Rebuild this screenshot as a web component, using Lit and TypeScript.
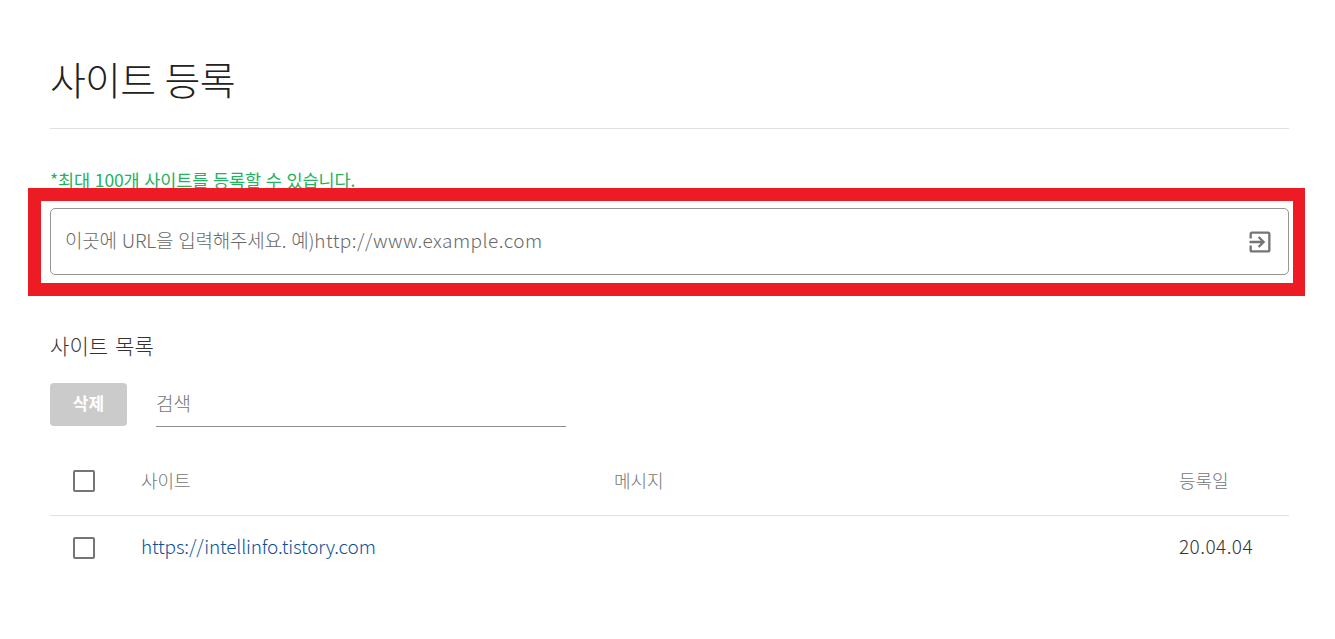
import { LitElement, html, css } from 'lit';
import { customElement, property } from 'lit/decorators.js';

interface SiteRow {
  url: string;
  message: string;
  date: string;
}

@customElement('site-checkbox')
export class SiteCheckbox extends LitElement {
  @property({ type: String }) label = '';

  static styles = css`
    :host {
      display: block;
      width: 22px;
      height: 22px;
    }

    .box {
      display: block;
      box-sizing: border-box;
      width: 22px;
      height: 22px;
      margin: 0;
      appearance: none;
      background: #fff;
      border: 2px solid #757575;
      border-radius: 2px;
    }
  `;

  render() {
    return html`<input class="box" type="checkbox" aria-label=${this.label} />`;
  }
}

@customElement('url-field')
export class UrlField extends LitElement {
  static styles = css`
    :host {
      display: block;
      position: relative;
    }

    .field {
      display: flex;
      align-items: center;
      justify-content: space-between;
      box-sizing: border-box;
      height: 67px;
      padding: 0 14px;
      border: 1px solid #959595;
      border-radius: 5px;
    }

    .hint {
      display: flex;
      align-items: baseline;
      padding-bottom: 4px;
      font-size: 19px;
      line-height: 28px;
      color: #686868;
      white-space: pre;
    }

    .korean {
      letter-spacing: -0.25px;
      word-spacing: 1.2px;
    }

    .latin {
      letter-spacing: 0.46px;
    }

    .icon {
      display: block;
      width: 28px;
      height: 28px;
      padding-top: 1px;
      fill: #757575;
    }

    /* Highlight frame laid over the field */
    .highlight {
      position: absolute;
      inset: -20px -16px -21px -22px;
      border: 13px solid #ed1c24;
      border-right-width: 12px;
      pointer-events: none;
    }
  `;

  render() {
    return html`
      <div class="field">
        <div class="hint"><span class="korean">이곳에 URL을 입력해주세요. 예)</span><span class="latin">http://www.example.com</span></div>
        <svg class="icon" viewBox="0 0 24 24" aria-hidden="true">
          <path d="M10.09 15.59L11.5 17l5-5-5-5-1.41 1.41L12.67 11H3v2h9.67l-2.58 2.59zM19 3H5c-1.11 0-2 .9-2 2v4h2V5h14v14H5v-4H3v4c0 1.1.89 2 2 2h14c1.1 0 2-.9 2-2V5c0-1.1-.9-2-2-2z"></path>
        </svg>
      </div>
      <div class="highlight"></div>
    `;
  }
}

@customElement('app-root')
export class AppRoot extends LitElement {
  @property({ attribute: false }) sites: SiteRow[] = [
    { url: 'https://intellinfo.tistory.com', message: '', date: '20.04.04' }
  ];

  static styles = css`
    :host {
      display: block;
      box-sizing: border-box;
      min-height: 639px;
      padding: 0 46px 0 50px;
      background: #fff;
      font-family: 'Noto Sans CJK KR', sans-serif;
      font-weight: 300;
      color: #212121;
    }

    .title {
      box-sizing: border-box;
      height: 129px;
      margin: 0;
      padding-top: 48px;
      border-bottom: 1px solid #e0e0e0;
      font-size: 39px;
      font-weight: 300;
      line-height: 60px;
      letter-spacing: -0.8px;
      word-spacing: 1.5px;
    }

    .notice {
      height: 26px;
      margin: 0;
      padding: 38px 0 15px;
      font-size: 17.5px;
      font-weight: 400;
      line-height: 26px;
      letter-spacing: -0.12px;
      word-spacing: 1px;
      color: #22b35e;
      white-space: nowrap;
    }

    .subtitle {
      margin: 0;
      padding: 53px 0 21px;
      font-size: 21px;
      font-weight: 300;
      line-height: 34px;
      letter-spacing: 0.1px;
      word-spacing: 2px;
      color: #333;
    }

    .toolbar {
      display: flex;
      gap: 29px;
      height: 44px;
    }

    .delete {
      width: 77px;
      height: 43px;
      padding: 0 0 4px;
      border: 0;
      border-radius: 4px;
      background: #cbcbcb;
      color: #fff;
      font-family: inherit;
      font-size: 17px;
      font-weight: 700;
    }

    .search {
      box-sizing: border-box;
      width: 410px;
      height: 44px;
      border-bottom: 1px solid #8d8d8d;
      font-size: 19px;
      line-height: 39px;
      color: #757575;
    }

    .row {
      display: grid;
      grid-template-columns: 91px 473px 565px 1fr;
      align-items: center;
      height: 64px;
      font-size: 18px;
    }

    .row site-checkbox {
      margin-left: 23px;
    }

    .head {
      box-sizing: border-box;
      height: 69px;
      margin-top: 20px;
      border-bottom: 1px solid #e0e0e0;
      color: #757575;
    }

    .cell {
      padding-bottom: 2px;
      line-height: 28px;
    }

    .link {
      font-size: 19px;
      letter-spacing: -0.18px;
      color: #0b519a;
    text-decoration: none;
    }

    .value {
      padding-bottom: 4px;
      font-size: 19px;
      letter-spacing: 0.45px;
      color: #333;
    }
  `;

  render() {
    return html`
      <h1 class="title">사이트 등록</h1>
      <p class="notice">*최대 100개 사이트를 등록할 수 있습니다.</p>
      <url-field></url-field>
      <h2 class="subtitle">사이트 목록</h2>
      <div class="toolbar">
        <button class="delete">삭제</button>
        <div class="search">검색</div>
      </div>
      <div class="row head">
        <site-checkbox></site-checkbox>
        <div class="cell">사이트</div>
        <div class="cell">메시지</div>
        <div class="cell">등록일</div>
      </div>
      ${this.sites.map(
        (site) => html`
          <div class="row">
            <site-checkbox></site-checkbox>
            <div class="cell value"><a class="link" href=${site.url}>${site.url}</a></div>
            <div class="cell value">${site.message}</div>
            <div class="cell value">${site.date}</div>
          </div>
        `
      )}
    `;
  }
}
